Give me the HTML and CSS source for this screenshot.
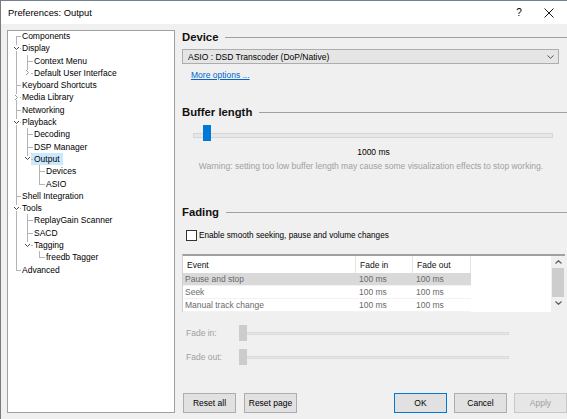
FILE: index.html
```html
<!DOCTYPE html>
<html lang="en">
<head>
    <meta charset="UTF-8">
    <title>Preferences: Output</title>
    <link rel="stylesheet" href="styles.css">
</head>
<body>
    <div class="window">
        <div class="title-bar">
            <span class="title">Preferences: Output</span>
            <span class="help-btn">?</span>
            <span class="close-btn">
                <svg width="10" height="10" viewBox="0 0 10 10"><path d="M0.5 0.5 L9.5 9.5 M9.5 0.5 L0.5 9.5" stroke="#000" stroke-width="0.9" fill="none"/></svg>
            </span>
        </div>
        <div class="content">
            <!-- Page tree -->
            <div class="tree-panel">
                <ul class="tree">
                    <li><span class="label">Components</span></li>
                    <li><span class="exp"><svg width="5" height="3" viewBox="0 0 5 3"><path d="M0 0 L2.5 2.5 L5 0" stroke="#444" fill="none"/></svg></span><span class="label">Display</span>
                        <ul>
                            <li><span class="label">Context Menu</span></li>
                            <li><span class="exp"><svg width="3" height="5" viewBox="0 0 3 5"><path d="M0 0 L2.5 2.5 L0 5" stroke="#999" fill="none"/></svg></span><span class="label">Default User Interface</span></li>
                        </ul>
                    </li>
                    <li><span class="label">Keyboard Shortcuts</span></li>
                    <li><span class="exp"><svg width="3" height="5" viewBox="0 0 3 5"><path d="M0 0 L2.5 2.5 L0 5" stroke="#999" fill="none"/></svg></span><span class="label">Media Library</span></li>
                    <li><span class="label">Networking</span></li>
                    <li><span class="exp"><svg width="5" height="3" viewBox="0 0 5 3"><path d="M0 0 L2.5 2.5 L5 0" stroke="#444" fill="none"/></svg></span><span class="label">Playback</span>
                        <ul>
                            <li><span class="label">Decoding</span></li>
                            <li><span class="label">DSP Manager</span></li>
                            <li><span class="exp"><svg width="5" height="3" viewBox="0 0 5 3"><path d="M0 0 L2.5 2.5 L5 0" stroke="#444" fill="none"/></svg></span><span class="label selected">Output</span>
                                <ul>
                                    <li><span class="label">Devices</span></li>
                                    <li><span class="label">ASIO</span></li>
                                </ul>
                            </li>
                        </ul>
                    </li>
                    <li><span class="label">Shell Integration</span></li>
                    <li><span class="exp"><svg width="5" height="3" viewBox="0 0 5 3"><path d="M0 0 L2.5 2.5 L5 0" stroke="#444" fill="none"/></svg></span><span class="label">Tools</span>
                        <ul>
                            <li><span class="label">ReplayGain Scanner</span></li>
                            <li><span class="label">SACD</span></li>
                            <li><span class="exp"><svg width="5" height="3" viewBox="0 0 5 3"><path d="M0 0 L2.5 2.5 L5 0" stroke="#444" fill="none"/></svg></span><span class="label">Tagging</span>
                                <ul>
                                    <li><span class="label">freedb Tagger</span></li>
                                </ul>
                            </li>
                        </ul>
                    </li>
                    <li><span class="label">Advanced</span></li>
                </ul>
            </div>

            <!-- Output page -->
            <div class="page">
                <div class="group-title">Device</div>
                <div class="select">
                    <span>ASIO : DSD Transcoder (DoP/Native)</span>
                    <svg width="7" height="4" viewBox="0 0 7 4"><path d="M0.5 0.5 L3.5 3.3 L6.5 0.5" stroke="#555" fill="none"/></svg>
                </div>
                <a class="more-link" href="#">More options ...</a>

                <div class="group-title buffer-title">Buffer length</div>
                <div class="slider">
                    <div class="slider-thumb"></div>
                </div>
                <div class="buffer-value">1000 ms</div>
                <div class="warning">Warning: setting too low buffer length may cause some visualization effects to stop working.</div>

                <div class="group-title fading-title">Fading</div>
                <label class="checkbox">
                    <span class="box"></span>
                    Enable smooth seeking, pause and volume changes
                </label>

                <div class="list">
                    <div class="list-body">
                        <div class="list-header">
                            <div class="col col-event">Event</div>
                            <div class="col col-in">Fade in</div>
                            <div class="col col-out">Fade out</div>
                            <div class="col col-rest"></div>
                        </div>
                        <div class="list-row selected">
                            <div class="col">Pause and stop</div>
                            <div class="col">100 ms</div>
                            <div class="col">100 ms</div>
                        </div>
                        <div class="list-row">
                            <div class="col">Seek</div>
                            <div class="col">100 ms</div>
                            <div class="col">100 ms</div>
                        </div>
                        <div class="list-row">
                            <div class="col">Manual track change</div>
                            <div class="col">100 ms</div>
                            <div class="col">100 ms</div>
                        </div>
                    </div>
                    <div class="scrollbar">
                        <div class="scroll-arrow"><svg width="7" height="4" viewBox="0 0 7 4"><path d="M0.5 3.5 L3.5 0.7 L6.5 3.5" stroke="#606060" stroke-width="1.2" fill="none"/></svg></div>
                        <div class="scroll-thumb"></div>
                        <div class="scroll-arrow"><svg width="7" height="4" viewBox="0 0 7 4"><path d="M0.5 0.5 L3.5 3.3 L6.5 0.5" stroke="#606060" stroke-width="1.2" fill="none"/></svg></div>
                    </div>
                </div>

                <div class="fade-row fade-in-row">
                    <span class="fade-label">Fade in:</span>
                    <div class="fade-thumb"></div>
                    <div class="fade-track"></div>
                </div>
                <div class="fade-row fade-out-row">
                    <span class="fade-label">Fade out:</span>
                    <div class="fade-thumb"></div>
                    <div class="fade-track"></div>
                </div>

                <div class="buttons">
                    <button>Reset all</button>
                    <button class="reset-page">Reset page</button>
                    <button class="ok-btn">OK</button>
                    <button>Cancel</button>
                    <button class="apply-btn" disabled>Apply</button>
                </div>
            </div>
        </div>
    </div>
</body>
</html>
```

FILE: styles.css
```css
* {
    margin: 0;
    padding: 0;
    box-sizing: border-box;
}

body {
    font-family: "Liberation Sans", Arial, sans-serif;
    font-size: 8.5px;
    color: #000;
    background-color: #F0F0F0;
    overflow: hidden;
}

.window {
    width: 567px;
    height: 419px;
    display: flex;
    flex-direction: column;
    background-color: #F0F0F0;
    border-left: 1px solid #7A7A7A;
}

/* Title bar */
.title-bar {
    height: 24px;
    background-color: #FFF;
    border-top: 1px solid #6F8197;
    display: flex;
    align-items: center;
    padding-left: 7px;
    padding-right: 3px;
}

.title {
    flex: 1;
    font-size: 9.4px;
}

.help-btn, .close-btn {
    width: 30px;
    display: flex;
    justify-content: center;
    align-items: center;
    font-size: 10px;
}

.content {
    flex: 1;
    display: flex;
    padding: 6px 0 6px 6px;
    min-height: 0;
}

/* Tree */
.tree-panel {
    width: 168px;
    background-color: #FFF;
    border: 1px solid #A0A0A0;
    overflow: hidden;
}

.tree, .tree ul {
    list-style: none;
}

.tree {
    margin-top: -1px;
}

.tree li {
    position: relative;
    line-height: 12.3px;
    padding-left: 12px;
    white-space: nowrap;
}

.tree > li {
    padding-left: 14px;
}

.tree li::before {
    content: "";
    position: absolute;
    left: 5px;
    top: 0;
    bottom: 0;
    border-left: 1px solid #B4B4B4;
}

.tree li::after {
    content: "";
    position: absolute;
    left: 5px;
    top: 6px;
    width: 6px;
    border-top: 1px solid #B4B4B4;
}

.tree > li::before, .tree > li::after {
    left: 8px;
}

.tree > li::after {
    width: 5px;
}

.tree li:last-child::before {
    bottom: auto;
    height: 6px;
}

.tree > li:first-child::before {
    top: 6px;
}

.tree .exp {
    position: absolute;
    left: 2px;
    top: 3px;
    width: 7px;
    height: 6px;
    background-color: #FFF;
    display: flex;
    align-items: center;
    justify-content: center;
    z-index: 1;
}

.tree > li > .exp {
    left: 5px;
}

.tree .label {
    display: inline-block;
}

.tree .label.selected {
    background-color: #CCE8FF;
    padding: 0 3px;
    margin-left: -3px;
}

/* Page */
.page {
    flex: 1;
    margin-left: 7px;
    display: flex;
    flex-direction: column;
}

.group-title {
    display: flex;
    align-items: center;
    gap: 7px;
    height: 14px;
    font-size: 11.3px;
    font-weight: bold;
    color: #111;
}

.group-title::after {
    content: "";
    flex: 1;
    border-top: 1px solid #A0A0A0;
}

.buffer-title {
    margin-top: 24px;
}

.fading-title {
    margin-top: 33px;
}

.select {
    margin-top: 5px;
    margin-right: 8px;
    height: 15px;
    border: 1px solid #ADADAD;
    background-color: #E5E5E5;
    display: flex;
    align-items: center;
    justify-content: space-between;
    padding: 0 4px 0 5px;
}

.more-link {
    display: block;
    margin-top: 5px;
    margin-left: 9px;
    line-height: 12px;
    color: #0066CC;
    text-decoration: underline;
}

.slider {
    position: relative;
    margin: 6px 14px 0 11px;
    height: 16px;
}

.slider::before {
    content: "";
    position: absolute;
    left: 0;
    right: 0;
    top: 8px;
    height: 3px;
    background-color: #E7E7E7;
    border: 1px solid #D6D6D6;
}

.slider-thumb {
    position: relative;
    margin-left: 10px;
    width: 8px;
    height: 16px;
    background-color: #0078D7;
}

.buffer-value {
    margin-top: 5px;
    line-height: 12px;
    text-align: center;
    padding-right: 2px;
}

.warning {
    margin-top: 2px;
    line-height: 12px;
    text-align: center;
    color: #A0A0A0;
    padding-right: 7px;
}

.checkbox {
    margin-top: 10px;
    margin-left: 4px;
    height: 12px;
    display: flex;
    align-items: center;
    gap: 2px;
    font-size: 8.2px;
}

.checkbox .box {
    width: 11px;
    height: 11px;
    border: 1px solid #333;
    background-color: #FFF;
}

/* Fading list */
.list {
    margin-top: 13px;
    margin-right: 2px;
    height: 58px;
    display: flex;
    background-color: #FFF;
    border-top: 2px solid #A0A0A0;
    border-left: 1px solid #D0D0D0;
    overflow: hidden;
}

.list-body {
    flex: 1;
}

.list-header {
    display: flex;
    height: 17px;
    align-items: stretch;
    color: #111;
}

.list-header .col {
    border-right: 1px solid #E5E5E5;
    display: flex;
    align-items: center;
}

.col-event {
    width: 173px;
    padding-left: 4px;
}

.col-in {
    width: 57px;
    padding-left: 4px;
}

.col-out {
    width: 58px;
    padding-left: 4px;
}

.list-header .col-rest {
    flex: 1;
    border-right: none;
}

.list-row {
    display: grid;
    grid-template-columns: 173px 57px 58px;
    width: 288px;
    height: 13px;
    line-height: 13px;
    color: #6A6A6A;
    border-bottom: 1px solid #F2F2F2;
}

.list-row .col {
    padding-left: 2px;
}

.list-row .col + .col {
    padding-left: 3px;
}

.list-row.selected {
    background-color: #D9D9D9;
}

.scrollbar {
    width: 14px;
    background-color: #F0F0F0;
    display: flex;
    flex-direction: column;
}

.scroll-arrow {
    height: 12px;
    display: flex;
    align-items: center;
    justify-content: center;
}

.scroll-thumb {
    height: 29px;
    margin: 0 1px;
    background-color: #CDCDCD;
}

.fade-row {
    display: flex;
    align-items: center;
    height: 16px;
    margin-left: 4px;
    color: #A0A0A0;
}

.fade-in-row {
    margin-top: 13px;
}

.fade-out-row {
    margin-top: 8px;
}

.fade-label {
    width: 53px;
}

.fade-thumb {
    width: 8px;
    height: 16px;
    background-color: #CCC;
}

.fade-track {
    width: 262px;
    height: 3px;
    background-color: #E7E7E7;
    border: 1px solid #DADADA;
    border-left: none;
}

/* Bottom buttons */
.buttons {
    margin-top: auto;
    display: flex;
    gap: 8px;
    padding-left: 1px;
}

button {
    width: 53px;
    height: 20px;
    font-family: "Liberation Sans", Arial, sans-serif;
    font-size: 8.5px;
    color: #000;
    background-color: #E1E1E1;
    border: 1px solid #ADADAD;
}

.reset-page {
    margin-right: auto;
}

.ok-btn {
    border-color: #0078D7;
    margin-right: -1px;
}

.buttons .ok-btn + button {
    margin-right: -1px;
}

.apply-btn {
    color: #A0A0A0;
    background-color: #E6E6E6;
    border-color: #C8C8C8;
}
```
